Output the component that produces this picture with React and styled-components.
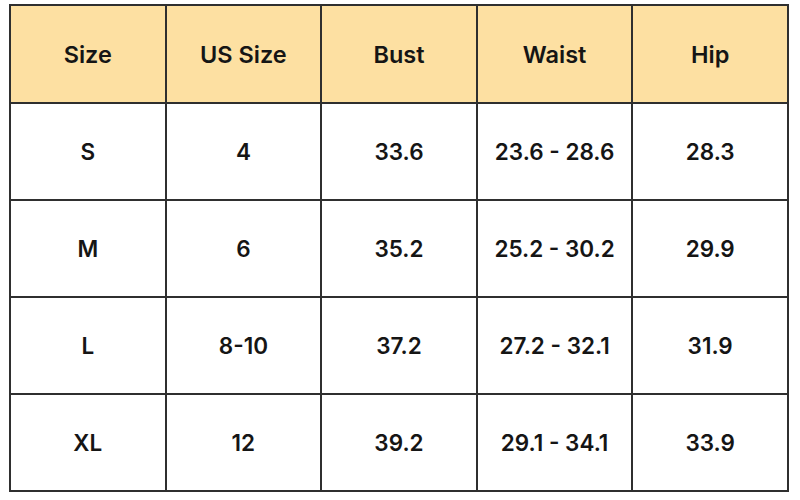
import React from 'react';
import styled, { createGlobalStyle } from 'styled-components';

const GlobalStyle = createGlobalStyle`
  body {
    margin: 0;
    background: #ffffff;
    font-family: Inter, "Liberation Sans", sans-serif;
  }
`;

const Page = styled.div`
  padding: 4px 11px 0 9px;
  width: 800px;
  height: 500px;
  box-sizing: border-box;
`;

const Table = styled.table`
  width: 780px;
  height: 488px;
  border-collapse: collapse;
  table-layout: fixed;
  border: 2px solid #2f2f2f;
`;

const HeadCell = styled.th`
  background: #fde0a2;
  border: 2px solid #2f2f2f;
  height: 96px;
  font-size: 23.5px;
  font-weight: 600;
  color: #151515;
  text-align: center;
  vertical-align: middle;
  padding: 0;
`;

const Cell = styled.td`
  border: 2px solid #2f2f2f;
  height: 95px;
  font-size: 22.5px;
  font-weight: 600;
  color: #151515;
  text-align: center;
  vertical-align: middle;
  padding: 0;
`;

const headers = ['Size', 'US Size', 'Bust', 'Waist', 'Hip'];

const rows = [
  ['S', '4', '33.6', '23.6 - 28.6', '28.3'],
  ['M', '6', '35.2', '25.2 - 30.2', '29.9'],
  ['L', '8-10', '37.2', '27.2 - 32.1', '31.9'],
  ['XL', '12', '39.2', '29.1 - 34.1', '33.9'],
];

const App = () => (
  <Page>
    <GlobalStyle />
    <Table>
      <thead>
        <tr>
          {headers.map(h => (
            <HeadCell key={h}>{h}</HeadCell>
          ))}
        </tr>
      </thead>
      <tbody>
        {rows.map(row => (
          <tr key={row[0]}>
            {row.map((value, i) => (
              <Cell key={`${row[0]}-${i}`}>{value}</Cell>
            ))}
          </tr>
        ))}
      </tbody>
    </Table>
  </Page>
);

export default App;
